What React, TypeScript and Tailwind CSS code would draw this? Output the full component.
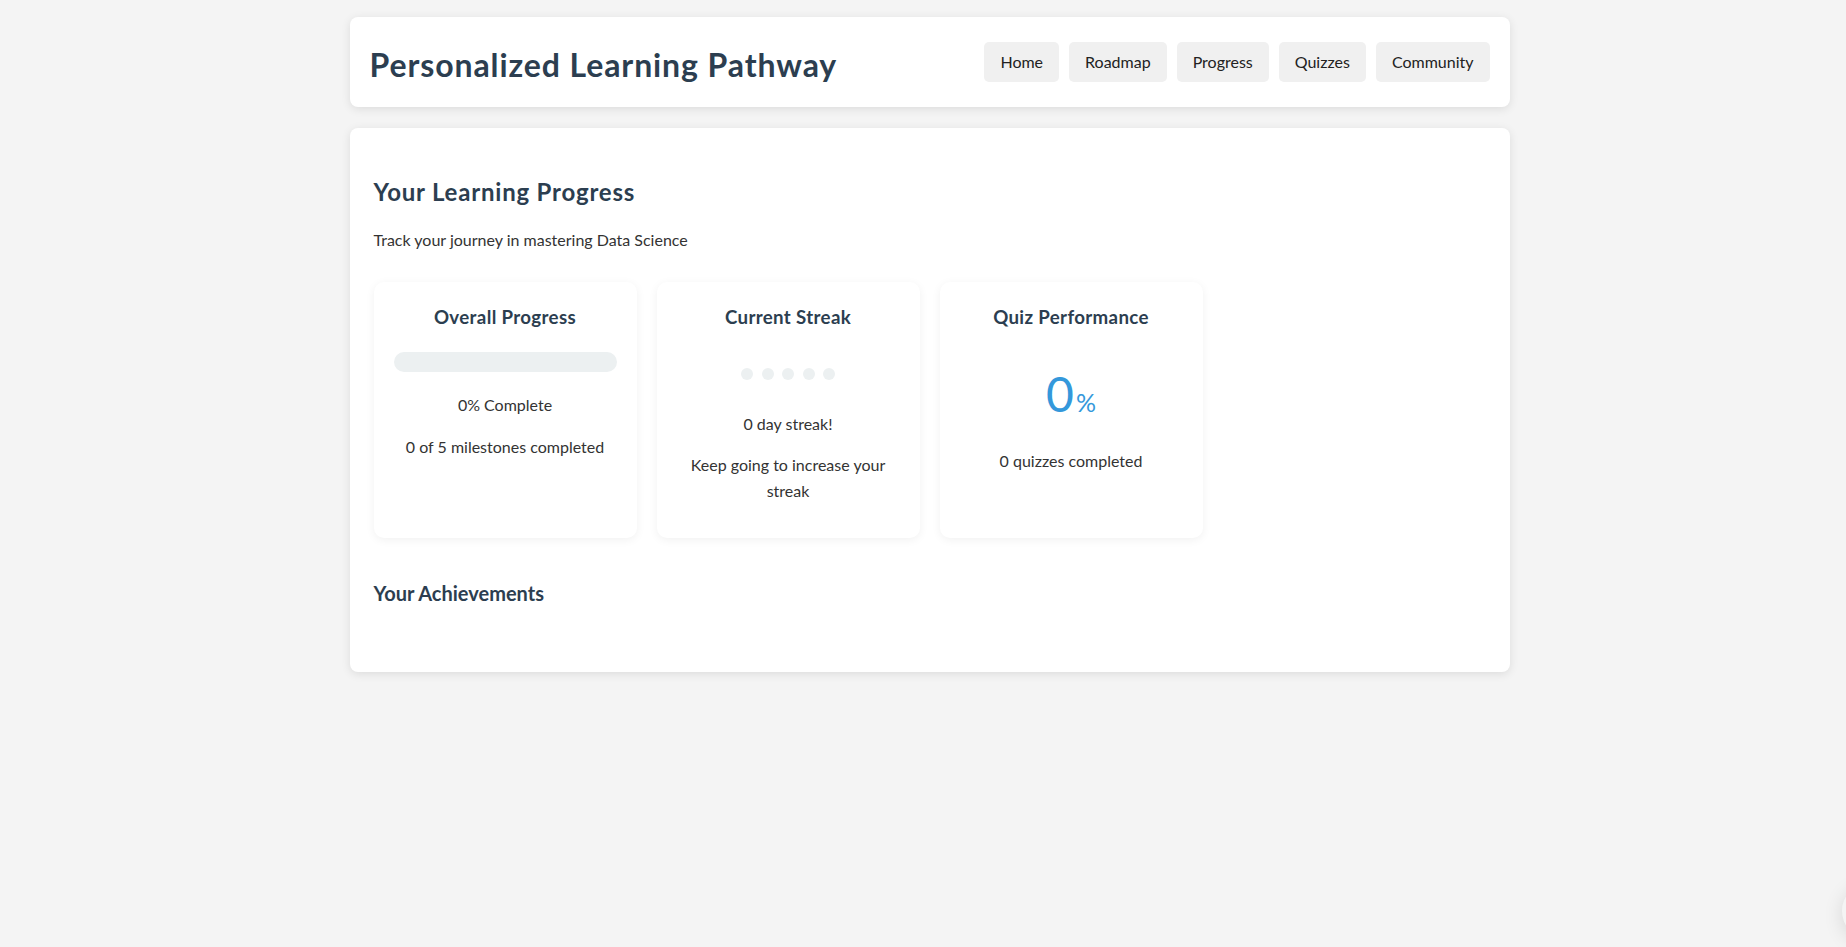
const navItems = ['Home', 'Roadmap', 'Progress', 'Quizzes', 'Community'];

function StatCard({ title, children }: { title: string; children: React.ReactNode }) {
  return (
    <div className="bg-white rounded-[10px] px-5 pt-5 pb-5 text-center shadow-[0_2px_10px_rgba(0,0,0,0.06)]">
      <h3 className="text-[18.7px] leading-[30px] font-bold tracking-[0.35px] text-[#2c3e50]">{title}</h3>
      {children}
    </div>
  );
}

export default function App() {
  return (
    <div className="min-h-screen bg-[#f4f4f4] font-['Lato',sans-serif] text-[#333] leading-[1.6]">
      <div className="flex justify-center pl-[13px] pt-[17px]">
        <div className="w-[1160px]">
          {/* Header */}
          <header className="h-[90px] bg-white rounded-lg shadow-[0_2px_10px_rgba(0,0,0,0.1)] px-5 flex items-center justify-between">
            <h1 className="text-[32px] font-bold tracking-[0.9px] text-[#2c3e50] leading-[43px] pt-[4px]">
              Personalized Learning Pathway
            </h1>
            <nav className="flex gap-[10px] mt-[-1px]">
              {navItems.map((item) => (
                <button
                  key={item}
                  className="h-[40px] px-4 rounded-[5px] bg-[#f0f0f0] text-[16px] text-[#222]"
                >
                  {item}
                </button>
              ))}
            </nav>
          </header>

          {/* Progress */}
          <main className="mt-[21px] bg-white rounded-lg shadow-[0_2px_10px_rgba(0,0,0,0.1)] px-6 pt-[45px] pb-[63px]">
            <h2 className="text-[24px] font-bold tracking-[0.8px] text-[#2c3e50] leading-[38px]">Your Learning Progress</h2>
            <p className="mt-4 text-[16px] leading-[26px]">Track your journey in mastering Data Science</p>

            <div className="mt-[29px] grid grid-cols-4 gap-5 h-[256px]">
              <StatCard title="Overall Progress">
                <div className="mt-5 h-5 rounded-[10px] bg-[#ecf0f1]" />
                <p className="mt-5 leading-[26px]">0% Complete</p>
                <p className="mt-4 leading-[26px]">0 of 5 milestones completed</p>
              </StatCard>

              <StatCard title="Current Streak">
                <div className="mt-[36px] flex justify-center gap-[8.5px]">
                  {[0, 1, 2, 3, 4].map((i) => (
                    <span key={i} className="w-3 h-3 rounded-full bg-[#ecf0f1]" />
                  ))}
                </div>
                <p className="mt-[31px] leading-[26px]">0 day streak!</p>
                <p className="mt-[15px] leading-[26px] px-2">Keep going to increase your streak</p>
              </StatCard>

              <StatCard title="Quiz Performance">
                <div className="mt-[32px] flex items-baseline justify-center text-[#3498db] leading-[60px]">
                  <span className="text-[48px]">0</span>
                  <span className="text-[25px] ml-[2px]">%</span>
                </div>
                <p className="mt-[16px] leading-[26px]">0 quizzes completed</p>
              </StatCard>
            </div>

            <h3 className="mt-[39px] text-[20px] font-bold text-[#2c3e50] leading-[32px]">Your Achievements</h3>
          </main>
        </div>
      </div>
      <div className="fixed right-[-52px] bottom-[8px] w-[56px] h-[56px] rounded-full bg-[#f4f4f4] shadow-[0_4px_20px_rgba(0,0,0,0.12)]" />
    </div>
  );
}
